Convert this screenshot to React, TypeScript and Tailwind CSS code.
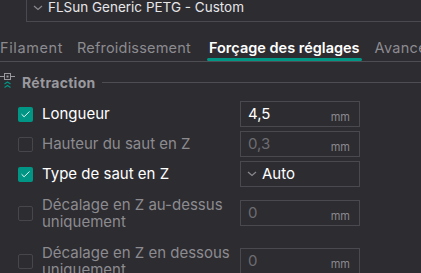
import { Check } from 'lucide-react';

const font = { fontFamily: 'Inter, "Noto Sans", sans-serif' };

function Checkbox({ checked }: { checked: boolean }) {
  return checked ? (
    <div className="w-[15px] h-[15px] rounded-[2px] bg-[#009685] flex items-center justify-center shrink-0">
      <Check size={11} strokeWidth={2} className="text-white" />
    </div>
  ) : (
    <div className="w-[15px] h-[15px] rounded-[2px] border border-[#47464c] shrink-0" />
  );
}

function Field({ value, unit, disabled }: { value: string; unit?: string; disabled?: boolean }) {
  return (
    <div className="w-[120px] h-[26px] border border-[#4a494f] flex items-center justify-between pl-[7px] pr-[9px] shrink-0">
      <span className={`text-[15px] ${disabled ? 'text-[#6d6c72]' : 'text-white'}`}>{value}</span>
      {unit && <span className="text-[11px] text-[#8a898f] mt-[6px]">{unit}</span>}
    </div>
  );
}

export default function App() {
  return (
    <div className="w-[421px] h-[273px] overflow-hidden bg-[#2d2c31]" style={font}>
      {/* preset dropdown */}
      <div className="ml-[26px] h-[22px] border-l border-b border-[#4a494f] flex items-start pl-[6px]">
        <svg width="10" height="6" viewBox="0 0 10 6" className="mr-[5px] mt-[5px]">
          <path d="M1 1 L5 4.5 L9 1" stroke="#8a898f" strokeWidth="1.2" fill="none" />
        </svg>
        <span className="text-[13.5px] text-[#e6e6e8] leading-[15px]">FLSun Generic PETG - Custom</span>
      </div>

      {/* tabs */}
      <div className="mt-[16px] h-[24px] border-b border-[#4e4d53] flex items-start whitespace-nowrap text-[14.5px]">
        <div className="w-[68px] text-[#8c8b90] leading-[20px] tracking-[0.6px]">Filament</div>
        <div className="ml-[14px] w-[114px] text-[#8c8b90] leading-[20px] tracking-[0.2px]">Refroidissement</div>
        <div className="ml-[16px] flex flex-col items-center">
          <span className="text-white font-semibold leading-[20px] px-[2px]">Forçage des réglages</span>
          <div className="h-[3px] w-full bg-[#009685] rounded-full" />
        </div>
        <div className="ml-[13px] text-[#8c8b90] leading-[20px] tracking-[0.3px]">Avancé</div>
      </div>

      {/* section header */}
      <div className="flex items-center mt-[10px] h-[20px]">
        <svg width="16" height="20" viewBox="0 0 16 20" className="shrink-0">
          <rect x="4.5" y="1.5" width="6" height="6" fill="none" stroke="#9a999e" strokeWidth="1" />
          <rect x="6.5" y="3.5" width="2" height="2" fill="#9a999e" />
          <path d="M0 4.5 H4 M11 4.5 H15" stroke="#9a999e" strokeWidth="1" />
          <path d="M4.5 12 L7.5 10 L10.5 12 M4.5 15.5 L7.5 13.5 L10.5 15.5" stroke="#009685" strokeWidth="1.2" fill="none" />
        </svg>
        <span className="ml-[6px] text-[14px] font-bold text-[#9a999e] tracking-[0.3px]">Rétraction</span>
        <div className="ml-[6px] flex-1 h-px bg-[#4e4d53]" />
      </div>

      {/* options */}
      <div className="mt-[9px] flex flex-col gap-[4px] text-[15px]">
        <div className="flex items-center h-[26px]">
          <div className="w-[42px] flex justify-end pr-[9px]"><Checkbox checked /></div>
          <span className="w-[198px] text-white">Longueur</span>
          <Field value="4,5" unit="mm" />
        </div>
        <div className="flex items-center h-[26px]">
          <div className="w-[42px] flex justify-end pr-[9px]"><Checkbox checked={false} /></div>
          <span className="w-[198px] text-[#8c8b90]">Hauteur du saut en Z</span>
          <Field value="0,3" unit="mm" disabled />
        </div>
        <div className="flex items-center h-[26px]">
          <div className="w-[42px] flex justify-end pr-[9px]"><Checkbox checked /></div>
          <span className="w-[198px] text-white">Type de saut en Z</span>
          <div className="w-[120px] h-[26px] border border-[#4a494f] flex items-center pl-[6px]">
            <svg width="10" height="6" viewBox="0 0 10 6" className="mr-[5px]">
              <path d="M1 1 L5 4.5 L9 1" stroke="#8a898f" strokeWidth="1.2" fill="none" />
            </svg>
            <span className="text-white text-[15px]">Auto</span>
          </div>
        </div>
        <div className="flex items-center mt-[5px]">
          <div className="w-[42px] flex justify-end pr-[9px]"><Checkbox checked={false} /></div>
          <span className="w-[198px] text-[#8c8b90] leading-[17px]">Décalage en Z au-dessus<br />uniquement</span>
          <Field value="0" unit="mm" disabled />
        </div>
        <div className="flex items-center mt-[10px]">
          <div className="w-[42px] flex justify-end pr-[9px]"><Checkbox checked={false} /></div>
          <span className="w-[198px] text-[#8c8b90] leading-[17px]">Décalage en Z en dessous<br />uniquement</span>
          <Field value="0" unit="mm" disabled />
        </div>
      </div>
    </div>
  );
}
